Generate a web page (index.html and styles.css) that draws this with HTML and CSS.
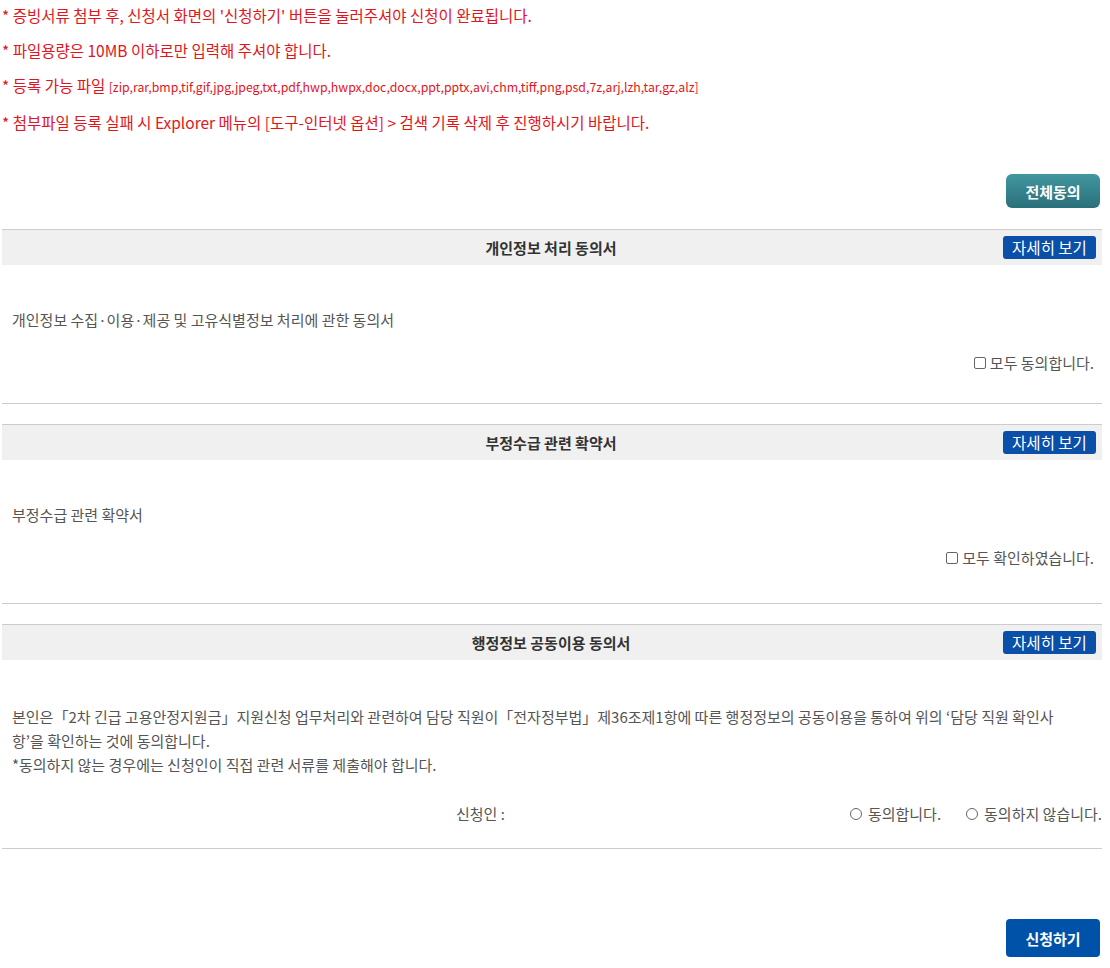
FILE: index.html
```html
<!DOCTYPE html>
<html>
<head>
	<meta charset="utf-8">
	<title>신청서 동의</title>
	<link rel="stylesheet" href="styles.css">
</head>
<body>

	<main class="page-wrap">
		<div class="notice">
			<p>* 증빙서류 첨부 후, 신청서 화면의 '신청하기' 버튼을 눌러주셔야 신청이 완료됩니다.</p>
			<p>* 파일용량은 10MB 이하로만 입력해 주셔야 합니다.</p>
			<p>* 등록 가능 파일 <span class="fileTypes">[zip,rar,bmp,tif,gif,jpg,jpeg,txt,pdf,hwp,hwpx,doc,docx,ppt,pptx,avi,chm,tiff,png,psd,7z,arj,lzh,tar,gz,alz]</span></p>
			<p>* 첨부파일 등록 실패 시 Explorer 메뉴의 [도구-인터넷 옵션] &gt; 검색 기록 삭제 후 진행하시기 바랍니다.</p>
		</div>

		<div class="btnRow topBtn">
			<button type="button" class="btnAll">전체동의</button>
		</div>

		<section class="agreeBox">
			<div class="agreeHead">
				<span></span>
				<h3 class="agreeTitle">개인정보 처리 동의서</h3>
				<button type="button" class="btnView">자세히 보기</button>
			</div>
			<div class="agreeBody body1">
				<p class="agreeText">개인정보 수집·이용·제공 및 고유식별정보 처리에 관한 동의서</p>
				<label class="checkRow"><input type="checkbox" class="chk"> 모두 동의합니다.</label>
			</div>
		</section>

		<section class="agreeBox">
			<div class="agreeHead">
				<span></span>
				<h3 class="agreeTitle">부정수급 관련 확약서</h3>
				<button type="button" class="btnView">자세히 보기</button>
			</div>
			<div class="agreeBody body2">
				<p class="agreeText">부정수급 관련 확약서</p>
				<label class="checkRow"><input type="checkbox" class="chk"> 모두 확인하였습니다.</label>
			</div>
		</section>

		<section class="agreeBox">
			<div class="agreeHead">
				<span></span>
				<h3 class="agreeTitle">행정정보 공동이용 동의서</h3>
				<button type="button" class="btnView">자세히 보기</button>
			</div>
			<div class="agreeBody body3">
				<p class="agreeText longText">본인은「2차 긴급 고용안정지원금」지원신청 업무처리와 관련하여 담당 직원이「전자정부법」제36조제1항에 따른 행정정보의 공동이용을 통하여 위의 ‘담당 직원 확인사항’을 확인하는 것에 동의합니다.<br>*동의하지 않는 경우에는 신청인이 직접 관련 서류를 제출해야 합니다.</p>
				<div class="applicantRow">
					<span class="applicant">신청인 :</span>
					<div class="radios">
						<label><input type="radio" name="share" class="rdo"> 동의합니다.</label>
						<label><input type="radio" name="share" class="rdo"> 동의하지 않습니다.</label>
					</div>
				</div>
			</div>
		</section>

		<div class="btnRow bottomBtn">
			<button type="button" class="btnSubmit">신청하기</button>
		</div>
	</main>

</body>
</html>
```

FILE: styles.css
```css
*{
	margin: 0;
	padding: 0;
	box-sizing: border-box;
}
body{
	font-family: "Noto Sans CJK KR", "Noto Sans", sans-serif;
	color: #555;
	background: #fff;
}
.page-wrap{
	width: 1100px;
	margin-left: 2px;
}
.notice p{
	color: #e3141b;
	font-size: 15.5px;
	line-height: 35px;
}
.notice p:first-child{
	margin-top: -2px;
}
.fileTypes{
	font-size: 12.3px;
}

.btnRow{
	display: flex;
	justify-content: flex-end;
}
.topBtn{
	margin-top: 34px;
	margin-bottom: 21px;
	padding-right: 2px;
}
.btnAll{
	width: 94px;
	height: 34px;
	border: 0;
	border-radius: 6px;
	background: linear-gradient(#42979f, #2a707b);
	color: #fff;
	font-family: inherit;
	font-size: 15px;
	font-weight: bold;
}

.agreeBox{
	border-top: solid 1px #ccc;
	border-bottom: solid 1px #ccc;
	margin-bottom: 20px;
}
.agreeHead{
	display: grid;
	grid-template-columns: 1fr auto 1fr;
	align-items: center;
	height: 35px;
	background-color: #f0f0f0;
	padding-right: 6px;
}
.agreeTitle{
	font-size: 15px;
	color: #333;
	font-weight: bold;
	padding-left: 4px;
}
.btnView{
	justify-self: end;
	width: 93px;
	height: 23px;
	border: 0;
	border-radius: 3px;
	background-color: #0a4fa8;
	color: #fff;
	font-family: inherit;
	font-size: 15.5px;
	line-height: 23px;
}

.agreeBody{
	padding: 43px 0 28px 10px;
	font-size: 15px;
	line-height: 24px;
}
.body2{
	padding-bottom: 33px;
}
.body3{
	padding-top: 45px;
	padding-bottom: 22px;
}
.longText{
	padding-right: 30px;
}
.checkRow{
	display: flex;
	justify-content: flex-end;
	align-items: center;
	gap: 4px;
	margin-top: 19px;
	padding-right: 8px;
}
.chk, .rdo{
	appearance: none;
	width: 12px;
	height: 12px;
	border: solid 1px #666;
	background: #fff;
	margin: 0;
}
.chk{
	border-radius: 2px;
}
.rdo{
	border-radius: 50%;
}

.applicantRow{
	display: flex;
	justify-content: space-between;
	align-items: center;
	margin-top: 25px;
}
.applicant{
	padding-left: 444px;
}
.radios{
	display: flex;
	gap: 25px;
}
.radios label{
	display: flex;
	align-items: center;
	gap: 6px;
}

.bottomBtn{
	margin-top: 70px;
	padding-right: 2px;
}
.btnSubmit{
	width: 94px;
	height: 38px;
	border: 0;
	border-radius: 4px;
	background-color: #0052a8;
	color: #fff;
	font-family: inherit;
	font-size: 15px;
	font-weight: bold;
}
```
